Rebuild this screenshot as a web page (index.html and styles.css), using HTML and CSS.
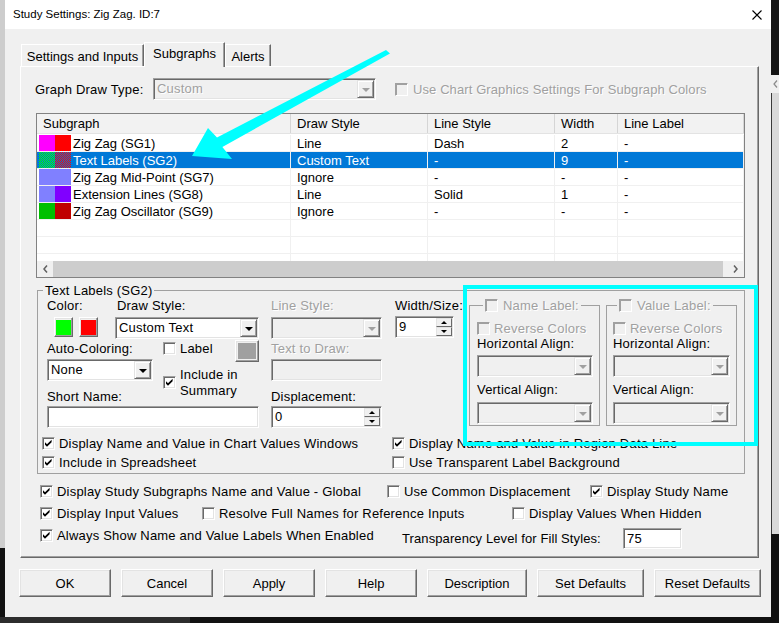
FILE: index.html
```html
<!DOCTYPE html>
<html>
<head>
<meta charset="utf-8">
<title>Study Settings</title>
<link rel="stylesheet" href="styles.css">
</head>
<body>
<div class="desk-left"></div>
<div class="desk-right">
  <div class="dr-top"></div>
  <div class="dr-band"><svg class="chev" viewBox="0 0 5 8"><polyline points="4,0.5 1,4 4,7.5" fill="none" stroke="#8a8a8a" stroke-width="1.2"/></svg></div>
  <div class="dr-mid"></div>
</div>
<div class="desk-bottom"></div>

<div class="window">
  <div class="titlebar">
    <span class="title">Study Settings: Zig Zag. ID:7</span>
    <svg class="close" viewBox="0 0 10 10"><path d="M0.5 0.5L9.5 9.5M9.5 0.5L0.5 9.5" stroke="#000" stroke-width="1.1" fill="none"/></svg>
  </div>

  <div class="tabstrip">
    <div class="tab t1">Settings and Inputs</div>
    <div class="tab t2">Subgraphs</div>
    <div class="tab t3">Alerts</div>
  </div>

  <div class="panel">
    <div class="gdt">
      <span class="gdt-l">Graph Draw Type:</span>
      <div class="combo off gdt-c"><span class="v dis">Custom</span><span class="ar"></span></div>
      <div class="cb dis gdt-cb"><span class="box"></span>Use Chart Graphics Settings For Subgraph Colors</div>
    </div>

    <div class="list">
      <div class="lhead">
        <div class="hc">Subgraph</div><div class="hc">Draw Style</div><div class="hc">Line Style</div><div class="hc">Width</div><div class="hc">Line Label</div>
      </div>
      <div class="lbody">
        <div class="lrow"><div class="first"><span class="sw magenta"></span><span class="sw red"></span><span class="nm">Zig Zag (SG1)</span></div><div>Line</div><div>Dash</div><div>2</div><div>-</div></div>
        <div class="lrow sel"><div class="first"><span class="sw dgreen"></span><span class="sw dred"></span><span class="nm">Text Labels (SG2)</span></div><div>Custom Text</div><div>-</div><div>9</div><div>-</div></div>
        <div class="lrow"><div class="first"><span class="sw lav"></span><span class="sw lav"></span><span class="nm">Zig Zag Mid-Point (SG7)</span></div><div>Ignore</div><div>-</div><div>-</div><div>-</div></div>
        <div class="lrow"><div class="first"><span class="sw lav"></span><span class="sw purple"></span><span class="nm">Extension Lines (SG8)</span></div><div>Line</div><div>Solid</div><div>1</div><div>-</div></div>
        <div class="lrow"><div class="first"><span class="sw green2"></span><span class="sw red2"></span><span class="nm">Zig Zag Oscillator (SG9)</span></div><div>Ignore</div><div>-</div><div>-</div><div>-</div></div>
        <div class="lrow"><div class="first"></div><div></div><div></div><div></div><div></div></div>
        <div class="lrow"><div class="first"></div><div></div><div></div><div></div><div></div></div>
        <div class="lrow"><div class="first"></div><div></div><div></div><div></div><div></div></div>
      </div>
      <div class="hscroll">
        <div class="sbtn"><svg class="chev" viewBox="0 0 5 8"><polyline points="4,0.5 1,4 4,7.5" fill="none" stroke="#606060" stroke-width="1.5"/></svg></div>
        <div class="thumb"></div>
        <div class="sgap"></div>
        <div class="sbtn"><svg class="chev" viewBox="0 0 5 8"><polyline points="1,0.5 4,4 1,7.5" fill="none" stroke="#606060" stroke-width="1.5"/></svg></div>
      </div>
    </div>

    <fieldset class="group">
      <legend>Text Labels (SG2)</legend>
      <div class="fgrid">
        <div class="lbl g-color-l">Color:</div>
        <div class="colors g-color-c"><span class="raised cbtn"><i class="green"></i></span><span class="raised cbtn"><i class="red"></i></span></div>
        <div class="lbl g-draw-l">Draw Style:</div>
        <div class="combo g-draw-c"><span class="v">Custom Text</span><span class="ar"></span></div>
        <div class="lbl dis g-ls-l">Line Style:</div>
        <div class="combo off g-ls-c"><span class="v"></span><span class="ar"></span></div>
        <div class="lbl g-ws-l">Width/Size:</div>
        <div class="spin g-ws-c"><span class="v">9</span><span class="sb"><span class="up"></span><span class="dn"></span></span></div>

        <fieldset class="sub g-name">
          <legend><span class="cb dis lg"><span class="box"></span>Name Label:</span></legend>
          <div class="cb dis rev"><span class="box"></span>Reverse Colors</div>
          <div class="lbl">Horizontal Align:</div>
          <div class="combo off sc1"><span class="v"></span><span class="ar"></span></div>
          <div class="lbl sl2">Vertical Align:</div>
          <div class="combo off sc2"><span class="v"></span><span class="ar"></span></div>
        </fieldset>
        <fieldset class="sub g-value">
          <legend><span class="cb dis lg"><span class="box"></span>Value Label:</span></legend>
          <div class="cb dis rev"><span class="box"></span>Reverse Colors</div>
          <div class="lbl">Horizontal Align:</div>
          <div class="combo off sc1"><span class="v"></span><span class="ar"></span></div>
          <div class="lbl sl2">Vertical Align:</div>
          <div class="combo off sc2"><span class="v"></span><span class="ar"></span></div>
        </fieldset>

        <div class="lbl g-auto-l">Auto-Coloring:</div>
        <div class="combo g-auto-c"><span class="v">None</span><span class="ar"></span></div>
        <div class="cb g-label"><span class="box"></span>Label</div>
        <div class="raised gbtn g-gray"><i></i></div>
        <div class="cb g-incl"><span class="box"><svg viewBox="0 0 9 9"><path d="M1 3.2L3 5.2L7.6 0.8V3.2L3 7.8L1 5.8Z"/></svg></span><span class="two">Include in<br>Summary</span></div>
        <div class="lbl dis g-ttd-l">Text to Draw:</div>
        <div class="field off g-ttd-c"></div>
        <div class="lbl g-sn-l">Short Name:</div>
        <div class="field g-sn-c"></div>
        <div class="lbl g-disp-l">Displacement:</div>
        <div class="spin g-disp-c"><span class="v">0</span><span class="sb"><span class="up"></span><span class="dn"></span></span></div>
      </div>
      <div class="gchecks">
        <div class="cb"><span class="box"><svg viewBox="0 0 9 9"><path d="M1 3.2L3 5.2L7.6 0.8V3.2L3 7.8L1 5.8Z"/></svg></span>Display Name and Value in Chart Values Windows</div>
        <div class="cb"><span class="box"><svg viewBox="0 0 9 9"><path d="M1 3.2L3 5.2L7.6 0.8V3.2L3 7.8L1 5.8Z"/></svg></span>Display Name and Value in Region Data Line</div>
        <div class="cb"><span class="box"><svg viewBox="0 0 9 9"><path d="M1 3.2L3 5.2L7.6 0.8V3.2L3 7.8L1 5.8Z"/></svg></span>Include in Spreadsheet</div>
        <div class="cb"><span class="box"></span>Use Transparent Label Background</div>
      </div>
    </fieldset>

    <div class="opts">
      <div class="orow">
        <div class="cb o1a"><span class="box"><svg viewBox="0 0 9 9"><path d="M1 3.2L3 5.2L7.6 0.8V3.2L3 7.8L1 5.8Z"/></svg></span>Display Study Subgraphs Name and Value - Global</div>
        <div class="cb o1b"><span class="box"></span>Use Common Displacement</div>
        <div class="cb"><span class="box"><svg viewBox="0 0 9 9"><path d="M1 3.2L3 5.2L7.6 0.8V3.2L3 7.8L1 5.8Z"/></svg></span>Display Study Name</div>
      </div>
      <div class="orow">
        <div class="cb o2a"><span class="box"><svg viewBox="0 0 9 9"><path d="M1 3.2L3 5.2L7.6 0.8V3.2L3 7.8L1 5.8Z"/></svg></span>Display Input Values</div>
        <div class="cb o2b"><span class="box"></span>Resolve Full Names for Reference Inputs</div>
        <div class="cb"><span class="box"></span>Display Values When Hidden</div>
      </div>
      <div class="orow">
        <div class="cb o3a"><span class="box"><svg viewBox="0 0 9 9"><path d="M1 3.2L3 5.2L7.6 0.8V3.2L3 7.8L1 5.8Z"/></svg></span>Always Show Name and Value Labels When Enabled</div>
        <div class="tlabel">Transparency Level for Fill Styles:</div>
        <div class="field tinput">75</div>
      </div>
    </div>
  </div>

  <div class="buttons">
    <div class="raised btn b92">OK</div>
    <div class="raised btn b92">Cancel</div>
    <div class="raised btn b92">Apply</div>
    <div class="raised btn b92">Help</div>
    <div class="raised btn b100">Description</div>
    <div class="raised btn b107">Set Defaults</div>
    <div class="raised btn b107">Reset Defaults</div>
  </div>
</div>

<svg class="overlay" width="779" height="623" viewBox="0 0 779 623">
  <polygon points="386,50 390,53.5 222.4,147 232,159 192,156 208,128 217,137.5" fill="#00ffff"/>
  <rect x="465" y="287" width="291" height="157" fill="none" stroke="#00ffff" stroke-width="4"/>
</svg>
</body>
</html>
```

FILE: styles.css
```css
* { box-sizing: border-box; }
html, body { margin: 0; padding: 0; }
body {
  position: relative;
  width: 779px;
  height: 623px;
  overflow: hidden;
  background: #111;
  font-family: "Liberation Sans", Arial, sans-serif;
  font-size: 13px;
  line-height: 15px;
  color: #000;
}

/* desktop behind the dialog */
.desk-left { position: absolute; left: 0; top: 0; width: 5px; height: 548px; background: #cdcdcd; }
.desk-right { position: absolute; left: 771px; top: 0; width: 8px; height: 623px; display: flex; flex-direction: column; }
.dr-top { height: 75px; background: #151515; }
.dr-band { height: 18px; background: #f0f0f0; display: flex; align-items: center; justify-content: center; }
.dr-mid { height: 441px; background: #d9d9d9; border-left: 1px solid #3a3a3a; }
.desk-bottom { position: absolute; left: 0; top: 617px; width: 190px; height: 6px; background: #2d2d2d; }

.chev { width: 5px; height: 8px; display: block; }

/* window */
.window { position: absolute; left: 5px; top: 0; width: 766px; height: 617px; background: #f0f0f0; }
.titlebar { height: 29px; background: #fff; display: flex; align-items: center; justify-content: space-between; padding: 0 9px 0 8px; }
.title { font-size: 11.5px; }
.close { width: 10px; height: 10px; display: block; }

/* tabs */
.tabstrip { position: relative; z-index: 1; display: flex; align-items: flex-end; height: 25px; margin-top: 13px; padding-left: 16px; }
.tab {
  height: 22px; margin-bottom: 1px; padding-top: 4px; text-align: center; background: #f0f0f0;
  border-top: 1px solid #fff; border-left: 1px solid #fff; border-right: 1px solid #696969;
  box-shadow: inset -1px 0 0 #a0a0a0;
  white-space: nowrap;
}
.t1 { width: 123px; }
.t2 { width: 81px; height: 25px; margin-bottom: 0; padding-top: 3px; }
.t3 { width: 46px; }

.panel {
  margin: -1px 0 0 15px; width: 739px; height: 492px;
  border: 1px solid; border-color: #fff #696969 #696969 #fff;
  box-shadow: inset -1px -1px 0 #a0a0a0;
  letter-spacing: 0.2px;
}

/* common controls */
.dis { color: #a0a0a0; text-shadow: 1px 1px 0 #fff; }
.raised {
  background: #f0f0f0; border: 1px solid; border-color: #fff #696969 #696969 #fff;
  box-shadow: inset -1px -1px 0 #a0a0a0, inset 1px 1px 0 #e3e3e3;
}
.combo, .spin, .field {
  height: 22px; background: #fff; padding: 1px;
  border: 1px solid; border-color: #a0a0a0 #fff #fff #a0a0a0;
  box-shadow: inset 1px 1px 0 #696969, inset -1px -1px 0 #e3e3e3;
}
.combo { display: flex; align-items: stretch; }
.combo .v, .spin .v { flex: 1; padding-left: 2px; line-height: 18px; white-space: nowrap; overflow: hidden; }
.combo .ar {
  width: 17px; flex: none; display: flex; align-items: center; justify-content: center;
  background: #f0f0f0; border: 1px solid; border-color: #e3e3e3 #696969 #696969 #e3e3e3;
  box-shadow: inset 1px 1px 0 #fff, inset -1px -1px 0 #a0a0a0;
}
.combo .ar::after { content: ""; border-left: 4px solid transparent; border-right: 4px solid transparent; border-top: 4px solid #000; margin-top: 1px; }
.combo.off, .field.off { background: #f0f0f0; }
.combo.off .ar::after { border-top-color: #a0a0a0; }

.spin { display: flex; }
.spin .sb { width: 16px; flex: none; display: flex; flex-direction: column; }
.spin .sb span {
  flex: 1; display: flex; align-items: center; justify-content: center;
  background: #f0f0f0; border: 1px solid; border-color: #e3e3e3 #696969 #696969 #e3e3e3;
}
.spin .up::after { content: ""; border-left: 3px solid transparent; border-right: 3px solid transparent; border-bottom: 3px solid #000; }
.spin .dn::after { content: ""; border-left: 3px solid transparent; border-right: 3px solid transparent; border-top: 3px solid #000; }
.field { padding-left: 3px; line-height: 18px; }

.cb { display: flex; align-items: center; white-space: nowrap; }
.box {
  width: 13px; height: 13px; flex: none; margin-right: 4px; background: #fff;
  border: 1px solid; border-color: #a0a0a0 #fff #fff #a0a0a0;
  box-shadow: inset 1px 1px 0 #696969, inset -1px -1px 0 #e3e3e3;
  display: flex; align-items: center; justify-content: center;
}
.box svg { width: 9px; height: 9px; display: block; fill: #000; }
.cb.dis .box { background: #f0f0f0; box-shadow: inset 1px 1px 0 #a0a0a0; }

/* graph draw type row */
.gdt { display: flex; align-items: center; height: 22px; margin: 11px 0 0 14px; }
.gdt-l { width: 118px; }
.gdt-c { width: 223px; }
.gdt-cb { margin-left: 19px; letter-spacing: 0.1px; }
.gdt-cb .box { margin-right: 5px; }

/* list view */
.list { margin: 13px 0 0 15px; width: 709px; height: 165px; border: 1px solid #828282; background: #fff; display: flex; flex-direction: column; letter-spacing: 0; }
.lhead, .lrow { display: grid; grid-template-columns: 254px 137px 127px 63px 126px; }
.lhead { height: 20px; background: #f2f2f2; border-bottom: 1px solid #e3e3e3; }
.hc { padding-left: 6px; line-height: 19px; border-right: 1px solid #d5d5d5; white-space: nowrap; }
.lbody { height: 127px; padding-top: 1px; overflow: hidden; }
.lrow { height: 17px; border-bottom: 1px solid #f0f0f0; }
.lrow > div { display: flex; align-items: center; padding-left: 6px; border-right: 1px solid #f0f0f0; white-space: nowrap; overflow: hidden; }
.lrow > .first { padding-left: 2px; }
.lrow.sel { background: #0078d7; color: #fff; }
.sw { width: 16px; height: 16px; flex: none; }
.nm { margin-left: 2px; }
.magenta { background: #ff00ff; }
.red { background: #ff0000; }
.lav { background: #8080ff; }
.purple { background: #8000ff; }
.green2 { background: #00c000; }
.red2 { background: #c00000; }
.dgreen { background: repeating-conic-gradient(#00ff00 0 25%, #0078d7 0 50%) 0 0 / 2px 2px; }
.dred { background: repeating-conic-gradient(#ff0000 0 25%, #0078d7 0 50%) 0 0 / 2px 2px; }

.hscroll { height: 16px; display: flex; background: #f0f0f0; }
.sbtn { width: 16px; display: flex; align-items: center; justify-content: center; }
.sbtn:last-child { width: 17px; }
.thumb { width: 670px; background: #cdcdcd; }
.sgap { flex: 1; }

/* Text Labels group */
.group { margin: 5px 0 0 16px; width: 708px; padding: 0 0 1px 0; border: 1px solid #a0a0a0; min-width: 0; }
.group > legend { margin-left: 5px; padding: 0 2px; line-height: 15px; }

.fgrid {
  display: grid; margin-left: 9px;
  grid-template-columns: 68px 38px 10px 72px 24px 12px 111px 13px 59px 15px 131px 6px 131px;
  grid-template-rows: 19px 24px 18px 30px 17px 22px;
}
.fgrid > * { align-self: start; }
.lbl { white-space: nowrap; }

.g-color-l { grid-column: 1; grid-row: 1; }
.g-color-c { grid-column: 1; grid-row: 2; }
.g-draw-l { grid-column: 2 / 6; grid-row: 1; padding-left: 2px; }
.g-draw-c { grid-column: 2 / 6; grid-row: 2; }
.g-ls-l { grid-column: 7; grid-row: 1; }
.g-ls-c { grid-column: 7; grid-row: 2; }
.g-ws-l { grid-column: 9 / 11; grid-row: 1; }
.g-ws-c { grid-column: 9; grid-row: 2; margin-top: -1px; }
.g-name { grid-column: 11; grid-row: 1 / 7; }
.g-value { grid-column: 13; grid-row: 1 / 7; }
.g-auto-l { grid-column: 1 / 3; grid-row: 3; }
.g-auto-c { grid-column: 1 / 3; grid-row: 4; }
.g-label { grid-column: 4; grid-row: 3; }
.g-gray { grid-column: 5; grid-row: 3; margin-top: -1px; }
.g-incl { grid-column: 4 / 6; grid-row: 4 / 6; align-self: center; }
.g-ttd-l { grid-column: 7; grid-row: 3; }
.g-ttd-c { grid-column: 7; grid-row: 4; }
.g-sn-l { grid-column: 1 / 6; grid-row: 5; }
.g-sn-c { grid-column: 1 / 6; grid-row: 6; }
.g-disp-l { grid-column: 7; grid-row: 5; }
.g-disp-c { grid-column: 7; grid-row: 6; }

.colors { display: flex; gap: 6px; margin-left: 7px; }
.cbtn { width: 19px; height: 20px; display: flex; align-items: center; justify-content: center; }
.cbtn i { width: 15px; height: 15px; display: block; }
.cbtn .green { background: #00ff00; }
.cbtn .red { background: #ff0000; }
.gbtn { width: 24px; height: 22px; display: flex; align-items: center; justify-content: center; }
.gbtn i { width: 18px; height: 16px; display: block; background: #a0a0a0; }
.g-incl .two { line-height: 16px; }

.sub { margin: 0; min-width: 0; border: 1px solid #a0a0a0; padding: 0 6px 1px 7px; }
.g-value { padding-left: 6px; }
.sub > legend { margin-left: 6px; padding: 0 2px; line-height: 15px; }
.g-value > legend { margin-left: 4px; }
.sub .lg .box { margin-right: 5px; }
.sub .rev { margin-top: 8px; height: 15px; }
.sub .sc1 { margin-top: 4px; }
.sub .sl2 { margin-top: 5px; }
.sub .sc2 { margin-top: 5px; }

.gchecks { display: grid; grid-template-columns: 350px auto; grid-auto-rows: 19px; align-items: center; margin: 6px 0 0 4px; }

/* global options */
.opts { margin: 6px 0 0 19px; }
.orow { display: flex; align-items: center; height: 22px; }
.o1a { width: 347px; }
.o1b { width: 203px; }
.o2a { width: 162px; }
.o2b { width: 310px; }
.o3a { width: 362px; }
.tlabel { width: 221px; margin-top: 6px; white-space: nowrap; letter-spacing: 0.1px; }
.tinput { width: 59px; height: 21px; margin-top: 6px; }

/* buttons */
.buttons { display: flex; gap: 10px; margin: 11px 0 0 14px; }
.btn { height: 28px; display: flex; align-items: center; justify-content: center; }
.b92 { width: 92px; }
.b100 { width: 100px; }
.b107 { width: 107px; }

.overlay { position: absolute; left: 0; top: 0; pointer-events: none; }
```
